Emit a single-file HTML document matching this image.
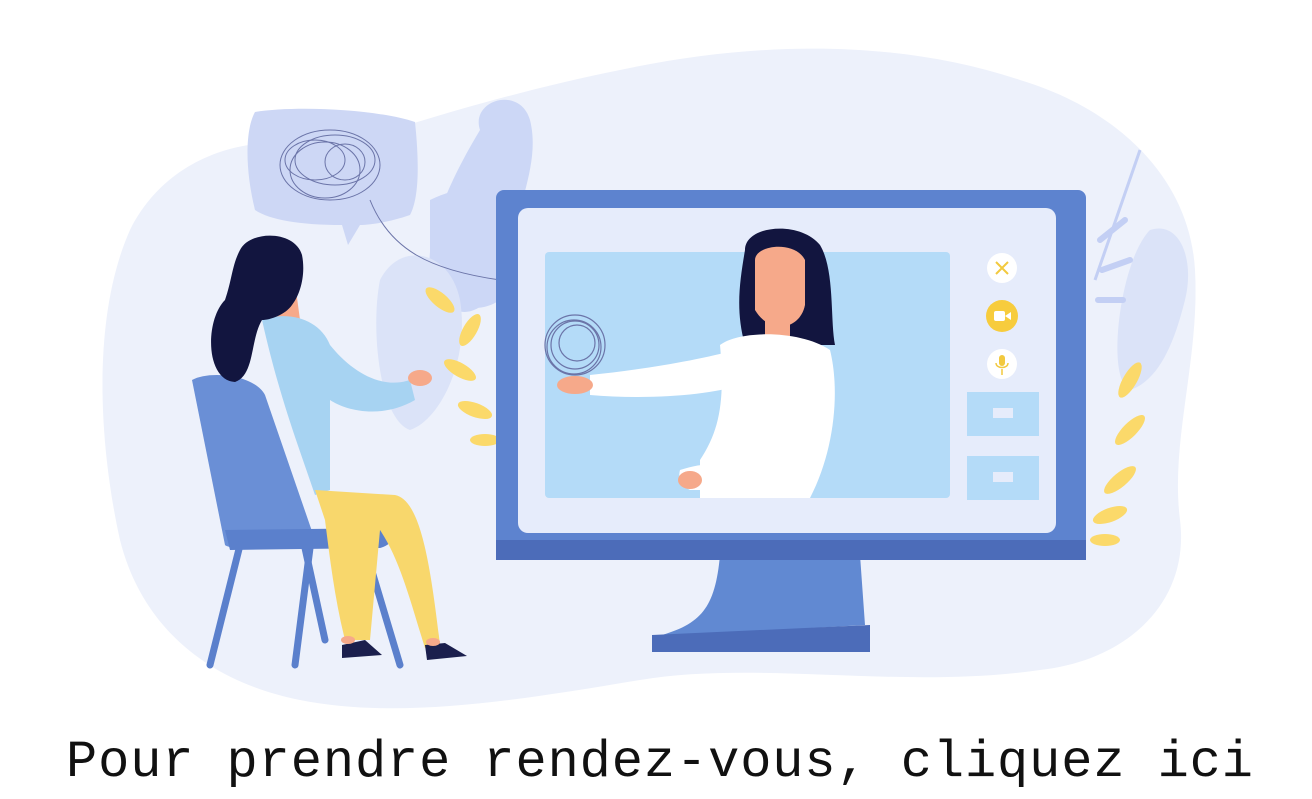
<!DOCTYPE html>
<html><head><meta charset="utf-8"><style>
html,body{margin:0;padding:0;background:#fff;width:1312px;height:799px;overflow:hidden}
svg{position:absolute;left:0;top:0}
.t{position:absolute;left:66px;top:733px;font-family:"Liberation Mono","DejaVu Sans Mono",monospace;font-size:52px;line-height:60px;color:#111;white-space:pre;letter-spacing:0.9px}
</style></head><body>
<svg width="1312" height="730" viewBox="0 0 1312 730">
<path d="M130 230 C170 150 260 130 330 150 C420 120 520 90 620 70 C760 40 900 40 1020 80 C1120 110 1190 180 1195 270 C1200 360 1170 440 1180 520 C1190 600 1130 660 1040 670 C900 690 760 660 640 680 C520 700 400 720 300 700 C200 680 140 620 120 540 C100 450 90 320 130 230Z" fill="#edf1fb"/>
<path d="M480 130 C470 100 520 85 530 120 C540 160 520 200 510 250 C500 300 470 330 440 300 C410 260 450 180 480 130Z" fill="#ccd7f6"/>
<path d="M430 200 C470 180 500 190 520 210 L500 300 C470 320 440 300 430 260Z" fill="#ccd7f6"/>
<path d="M380 280 C400 240 450 250 460 300 C470 360 440 420 410 430 C380 420 370 330 380 280Z" fill="#dbe3f8"/>
<path d="M1150 230 C1180 220 1195 260 1185 300 C1175 340 1160 380 1130 390 C1105 380 1120 260 1150 230Z" fill="#dbe3f8"/>
<path d="M1140 150 L1095 280" stroke="#c3cff4" stroke-width="3"/>
<path d="M1100 240 l25 -20 M1102 270 l28 -10 M1098 300 l25 0" stroke="#c3cff4" stroke-width="6" stroke-linecap="round"/>
<path d="M255 112 C300 105 380 110 415 122 C420 170 418 200 410 215 C390 222 370 225 360 225 L348 245 L342 225 C300 225 270 220 255 210 C245 170 245 130 255 112Z" fill="#cdd7f5"/>
<g fill="none" stroke="#6b74a8" stroke-width="1"><ellipse cx="330" cy="165" rx="50" ry="35"/><ellipse cx="335" cy="160" rx="40" ry="25"/><ellipse cx="325" cy="170" rx="35" ry="28"/><ellipse cx="345" cy="162" rx="20" ry="18"/><ellipse cx="315" cy="160" rx="30" ry="20"/></g>
<path d="M370 200 C390 250 430 270 500 280 C540 290 570 300 580 330" fill="none" stroke="#6b74a8" stroke-width="1"/>
<g fill="#fbd96a"><ellipse cx="440" cy="300" rx="18" ry="7" transform="rotate(40 440 300)"/><ellipse cx="470" cy="330" rx="18" ry="7" transform="rotate(-60 470 330)"/><ellipse cx="460" cy="370" rx="18" ry="7" transform="rotate(30 460 370)"/><ellipse cx="475" cy="410" rx="18" ry="7" transform="rotate(20 475 410)"/><ellipse cx="485" cy="440" rx="15" ry="6"/>
<ellipse cx="1130" cy="380" rx="20" ry="7" transform="rotate(-60 1130 380)"/><ellipse cx="1130" cy="430" rx="20" ry="7" transform="rotate(-45 1130 430)"/><ellipse cx="1120" cy="480" rx="20" ry="7" transform="rotate(-40 1120 480)"/><ellipse cx="1110" cy="515" rx="18" ry="7" transform="rotate(-20 1110 515)"/><ellipse cx="1105" cy="540" rx="15" ry="6"/></g>
<path d="M720 555 L860 555 L865 625 L655 637 C700 625 715 610 720 555Z" fill="#6189d2"/>
<path d="M652 635 L870 625 L870 652 L652 652Z" fill="#4c6cb9"/>
<rect x="496" y="190" width="590" height="370" rx="8" fill="#5d83cf"/>
<rect x="496" y="540" width="590" height="20" fill="#4c6cb9"/>
<rect x="518" y="208" width="538" height="325" rx="10" fill="#e6ecfb"/>
<rect x="545" y="252" width="405" height="246" rx="4" fill="#b4dbf8"/>
<circle cx="1002" cy="268" r="15" fill="#fff"/><path d="M996 262l12 12M1008 262l-12 12" stroke="#f2c93f" stroke-width="2"/>
<circle cx="1002" cy="316" r="16" fill="#f7cc3d"/><rect x="994" y="311" width="11" height="10" rx="2" fill="#fff"/><path d="M1005 316l6-4v8z" fill="#fff"/>
<circle cx="1002" cy="364" r="15" fill="#fff"/><rect x="999" y="355" width="6" height="11" rx="3" fill="#f2c93f"/><path d="M996 363c0 6 12 6 12 0M1002 369v6" stroke="#f2c93f" fill="none" stroke-width="1.5"/>
<rect x="967" y="392" width="72" height="44" fill="#b4dbf8"/><rect x="993" y="408" width="20" height="10" fill="#e6ecfb"/>
<rect x="967" y="456" width="72" height="44" fill="#b4dbf8"/><rect x="993" y="472" width="20" height="10" fill="#e6ecfb"/>
<path d="M745 250 C745 225 800 220 820 245 C835 270 830 320 835 345 L745 345 C735 310 740 280 745 250Z" fill="#12153f"/>
<path d="M755 260 C755 245 795 240 805 260 L805 305 C800 330 770 335 755 310Z" fill="#f6a98a"/>
<rect x="765" y="310" width="25" height="30" fill="#f6a98a"/>
<path d="M720 345 C740 330 800 330 830 350 C840 390 835 450 810 498 L700 498 L700 460 C720 430 725 400 720 345Z" fill="#fff"/>
<path d="M735 350 C700 360 640 370 590 375 L590 395 C650 400 710 395 740 385Z" fill="#fff"/>
<path d="M680 470 C710 460 730 465 740 470 L740 490 L690 490 C680 485 678 478 680 470Z" fill="#fff"/>
<ellipse cx="575" cy="385" rx="18" ry="9" fill="#f6a98a"/>
<ellipse cx="690" cy="480" rx="12" ry="9" fill="#f6a98a"/>
<g fill="none" stroke="#6b74a8" stroke-width="1.2"><circle cx="575" cy="345" r="30"/><circle cx="575" cy="345" r="24"/><circle cx="577" cy="343" r="18"/><circle cx="574" cy="347" r="27"/></g>
<path d="M192 380 C210 370 255 375 265 395 L315 540 L300 545 C270 550 230 550 225 545 Z" fill="#6a8fd6"/>
<path d="M225 530 L390 528 C395 540 390 545 380 548 L230 550Z" fill="#5b80cc"/>
<g stroke="#5b80cc" stroke-width="7" stroke-linecap="round"><path d="M240 545 L210 665"/><path d="M310 548 L295 665"/><path d="M365 548 L400 665"/><path d="M305 548 L325 640"/></g>
<path d="M270 318 C285 315 292 305 296 290 L300 320 L275 330Z" fill="#f6a98a"/>
<path d="M262 320 C290 310 320 320 330 345 C350 370 380 390 410 380 L415 400 C380 420 345 410 330 400 L330 490 L315 495 C300 450 280 400 262 320Z" fill="#a7d3f2"/>
<path d="M240 250 C250 230 295 230 302 255 C306 275 300 295 292 305 C285 315 270 320 262 320 C250 340 255 375 235 382 C205 380 205 320 225 300 C232 280 232 265 240 250Z" fill="#12153f"/>
<ellipse cx="420" cy="378" rx="12" ry="8" fill="#f6a98a"/>
<path d="M315 490 L395 495 C420 500 430 560 440 645 L425 648 C410 600 400 560 380 530 L370 640 L345 640 C335 600 330 560 325 520 Z" fill="#f8d76c"/>
<path d="M342 645 L365 640 L382 655 L342 658Z" fill="#1b1f4d"/>
<path d="M425 645 L445 643 L467 656 L427 660Z" fill="#1b1f4d"/>
<ellipse cx="348" cy="640" rx="7" ry="4" fill="#f6a98a"/><ellipse cx="433" cy="642" rx="7" ry="4" fill="#f6a98a"/>
</svg>
<div class="t">Pour prendre rendez-vous, cliquez ici</div>
</body></html>
